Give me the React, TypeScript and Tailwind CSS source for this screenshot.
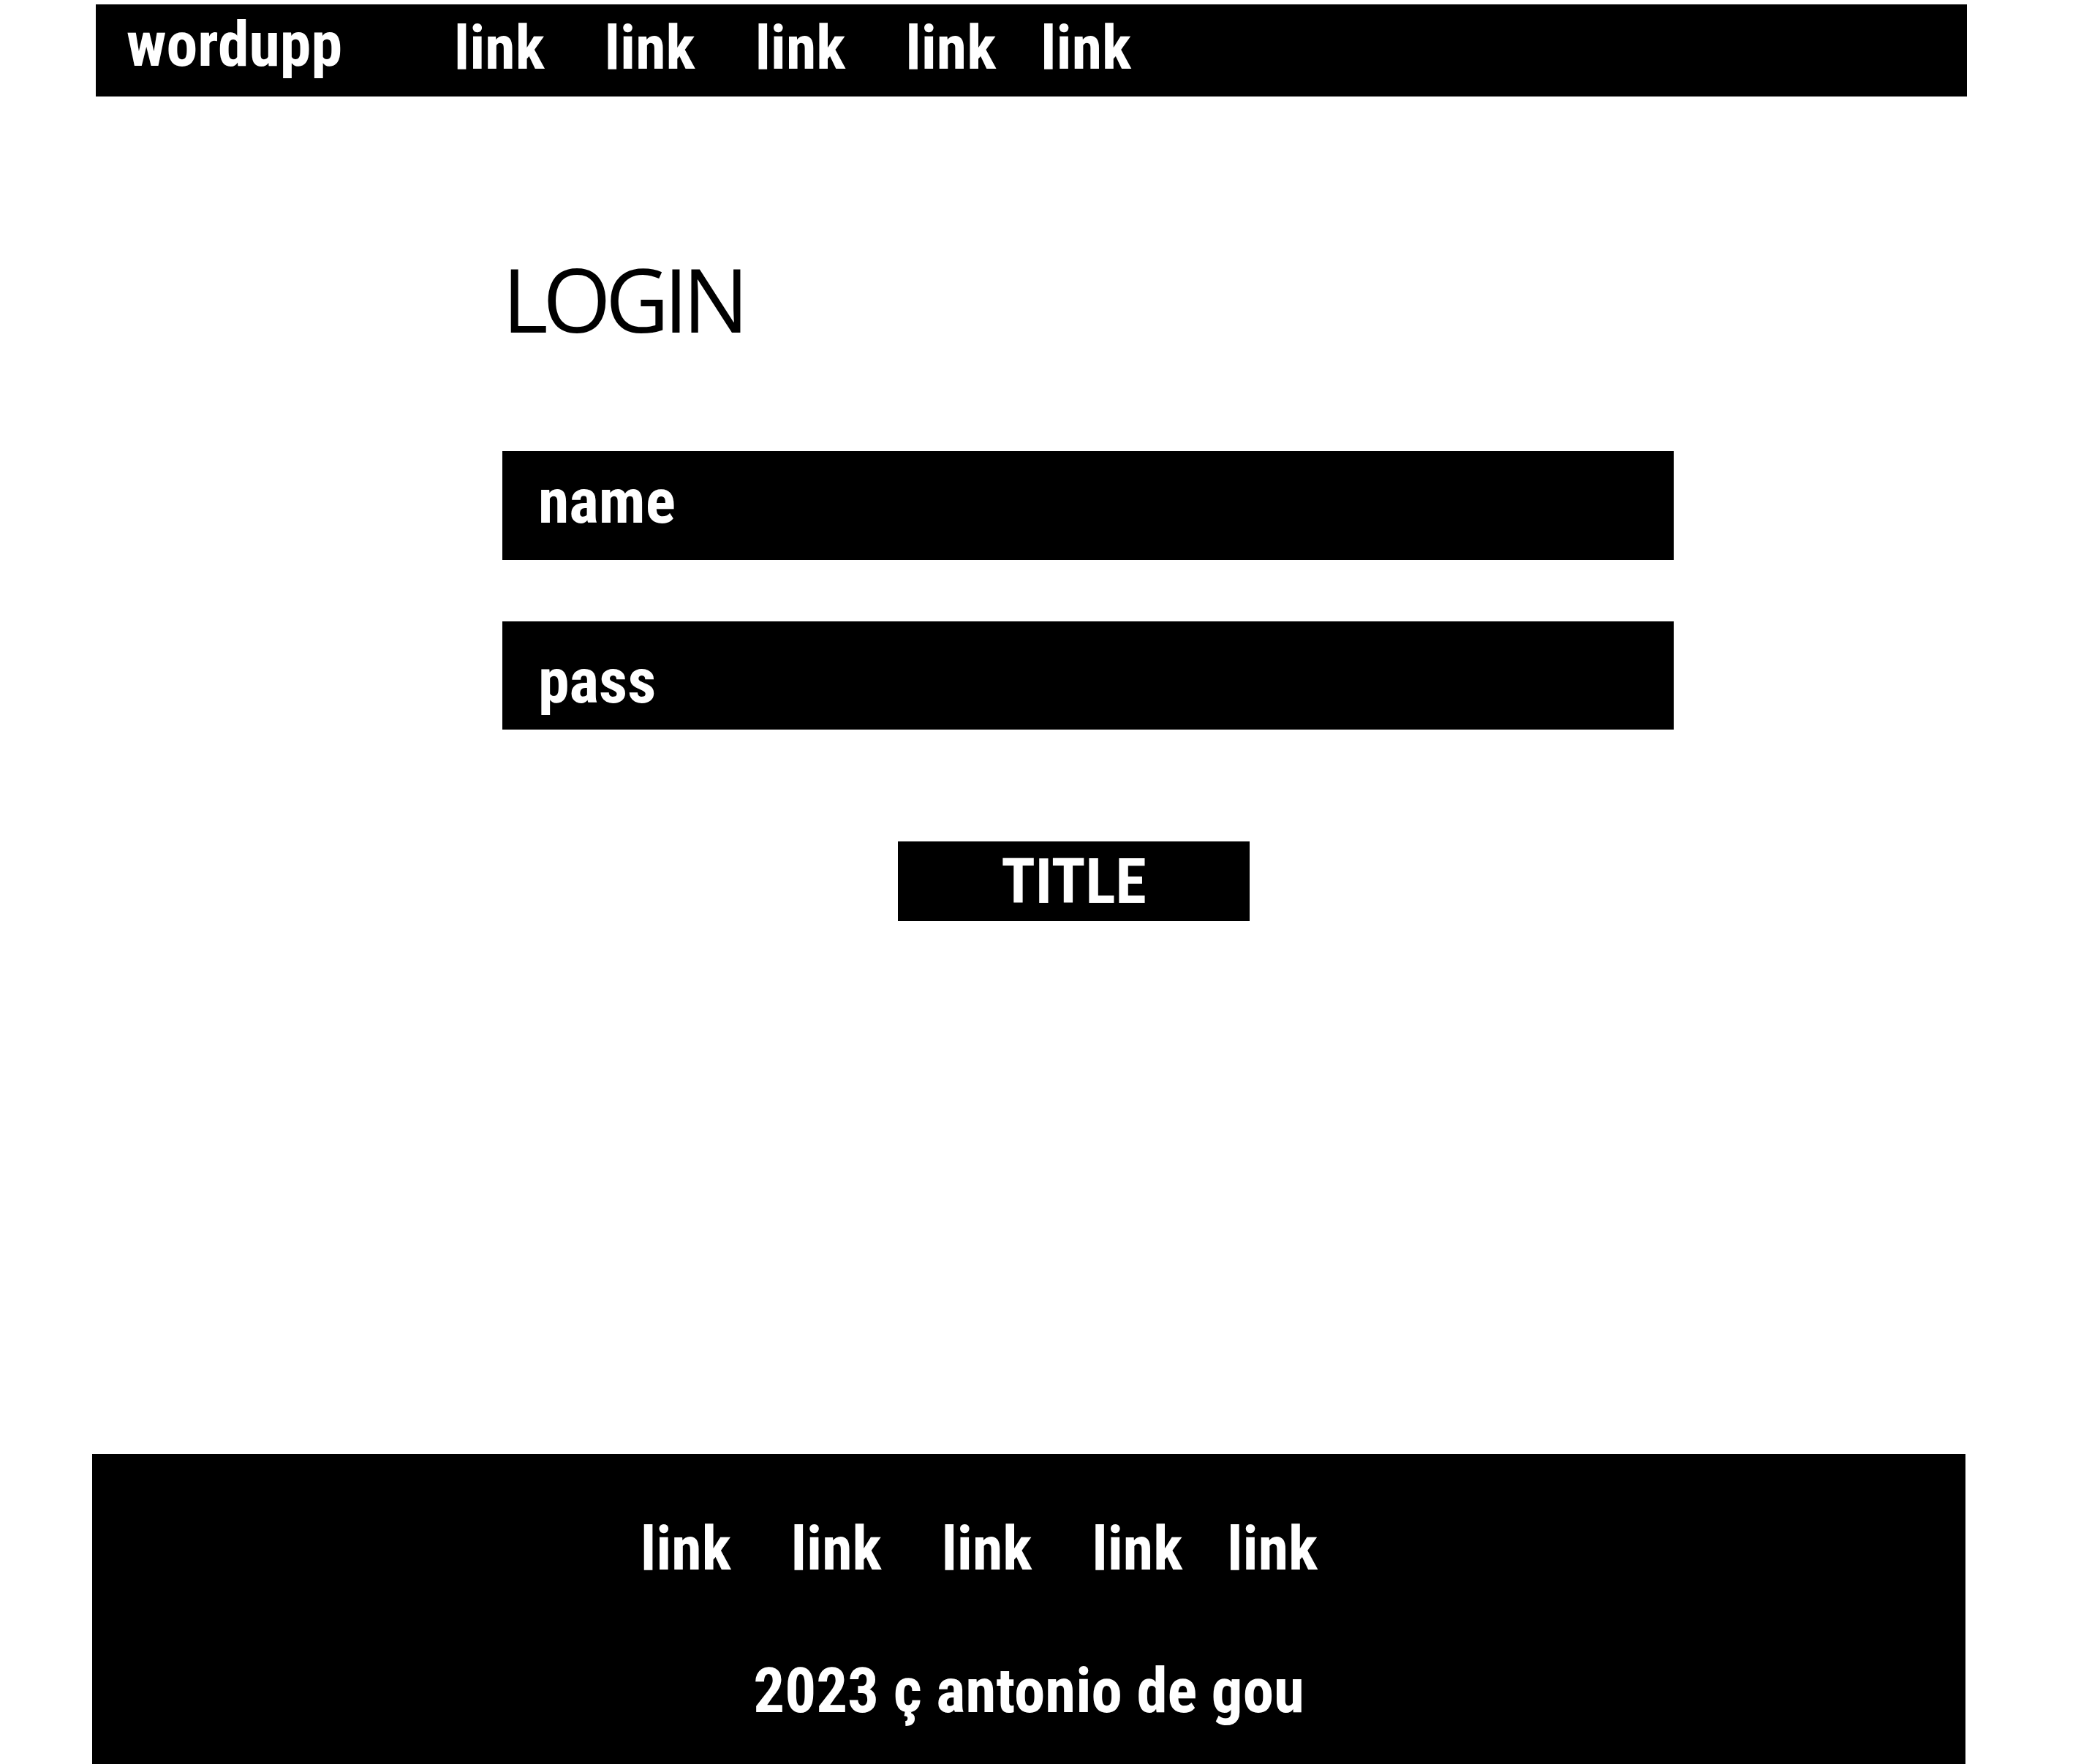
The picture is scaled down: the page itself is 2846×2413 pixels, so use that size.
const cond = "font-['Roboto_Condensed','Liberation_Sans_Narrow','DejaVu_Sans_Condensed',Roboto,sans-serif] font-bold [font-stretch:condensed]";

const links = ['link', 'link', 'link', 'link', 'link'];

function LinkRow() {
  return (
    <div className="flex items-baseline">
      {links.map((l, i) => (
        <a
          key={i}
          href="#"
          className={`text-white text-[84px] leading-none ${i === links.length - 1 ? 'ml-[61px]' : i > 0 ? 'ml-[82px]' : ''}`}
        >
          {l}
        </a>
      ))}
    </div>
  );
}

export default function App() {
  return (
    <div className={`relative w-[2846px] h-[2413px] bg-white flex flex-col ${cond}`}>
      {/* Header */}
      <header className="mt-[6px] ml-[131px] w-[2559px] h-[126px] bg-black flex items-start">
        <span className="mt-[12px] ml-[42px] w-[448px] text-white text-[86px] leading-none">wordupp</span>
        <nav className="mt-[18px]">
          <LinkRow />
        </nav>
      </header>

      {/* Login form */}
      <main className="ml-[687px] w-[1602px] flex flex-col">
        <h1 className="mt-[217px] font-['Open_Sans',sans-serif] font-normal [font-stretch:normal] text-[120px] leading-none tracking-[-7.5px] text-black">
          LOGIN
        </h1>
        <div className="mt-[148px] h-[149px] bg-black flex items-start pt-[26px] pl-[49px]">
          <span className="text-white text-[86px] leading-none">name</span>
        </div>
        <div className="mt-[84px] h-[148px] bg-black flex items-start pt-[39px] pl-[49px]">
          <span className="text-white text-[86px] leading-none">pass</span>
        </div>
        <button className="mt-[153px] ml-[541px] w-[481px] h-[109px] bg-black text-white text-[86px] leading-none flex items-center justify-center">
          TITLE
        </button>
      </main>

      {/* Footer */}
      <footer className="mt-auto ml-[126px] w-[2562px] h-[424px] bg-black flex flex-col">
        <div className="mt-[88px] ml-[750px]">
          <LinkRow />
        </div>
        <p className="mt-[110px] text-center text-white text-[85px] leading-none">
          2023 ç antonio de gou
        </p>
      </footer>
    </div>
  );
}
